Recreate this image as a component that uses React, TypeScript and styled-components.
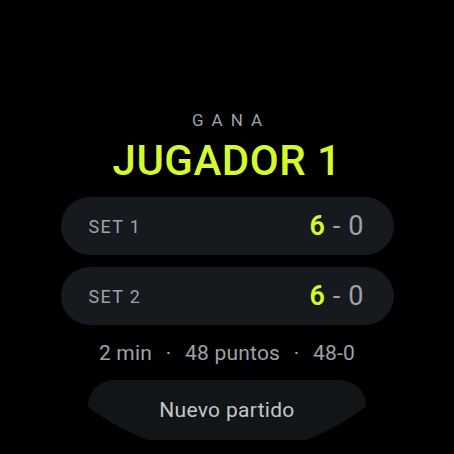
import { Fragment } from "react"
import { createGlobalStyle, styled } from "styled-components"

const GlobalStyle = createGlobalStyle`
  html, body {
    margin: 0;
    padding: 0;
    background: #000;
  }
  body {
    font-family: Roboto, "Noto Sans", "Liberation Sans", sans-serif;
  }
`

const LIME = '#d4fa2d'
const MUTED = '#9da2a8'

const Screen = styled.div`
  width: 454px;
  height: 454px;
  border-radius: 50%;
  overflow: hidden;
  background: #000;
  display: flex;
  flex-direction: column;
  align-items: center;
  padding-top: 110px;
  box-sizing: border-box;
`

const Caption = styled.div`
  font-size: 17px;
  line-height: 20px;
  letter-spacing: 0.47em;
  margin-right: -0.47em;
  color: ${MUTED};
`

const Winner = styled.h1`
  margin: 8px 0 0;
  font-size: 42px;
  line-height: 46px;
  font-weight: 500;
  letter-spacing: 0.5px;
  color: ${LIME};
`

const Sets = styled.div`
  margin-top: 13px;
  display: flex;
  flex-direction: column;
  row-gap: 12px;
`

const SetRow = styled.div`
  width: 333px;
  height: 58px;
  box-sizing: border-box;
  padding: 0 30px 0 28px;
  border-radius: 29px;
  background-color: #16191d;
  display: flex;
  align-items: center;
  justify-content: space-between;
`

const SetLabel = styled.span`
  font-size: 18px;
  letter-spacing: 1.3px;
  color: ${MUTED};
`

const Score = styled.span`
  font-size: 27px;
  color: ${MUTED};
`

const Points = styled.span<{ $win?: boolean }>`
  color: ${props => props.$win ? LIME : MUTED};
  font-weight: ${props => props.$win ? 600 : 400};
`

const Dash = styled.span`
  padding: 0 8px;
`

const Summary = styled.div`
  margin-top: 16px;
  font-size: 21px;
  line-height: 24px;
  letter-spacing: 0.2px;
  color: ${MUTED};
  display: flex;
  white-space: pre;
`

const Dot = styled.span`
  width: 33px;
  text-align: center;
`

const NewMatchButton = styled.button`
  margin-top: 15px;
  flex-shrink: 0;
  width: 278px;
  height: 60px;
  border: none;
  border-radius: 26px 26px 0 0;
  background-color: #121518;
  color: #c3c6c9;
  font-family: inherit;
  font-size: 21px;
  letter-spacing: 0.3px;
  padding: 0;
  cursor: pointer;
`

const sets = [
  { name: 'SET 1', a: 6, b: 0 },
  { name: 'SET 2', a: 6, b: 0 },
]

const stats = ['2 min', '48 puntos', '48-0']

export default function App() {
  return (
    <>
      <GlobalStyle />
      <Screen>
        <Caption>GANA</Caption>
        <Winner>JUGADOR 1</Winner>
        <Sets>
          {sets.map(set => (
            <SetRow key={set.name}>
              <SetLabel>{set.name}</SetLabel>
              <Score>
                <Points $win={set.a > set.b}>{set.a}</Points>
                <Dash>-</Dash>
                <Points $win={set.b > set.a}>{set.b}</Points>
              </Score>
            </SetRow>
          ))}
        </Sets>
        <Summary>
          {stats.map((s, i) => (
            <Fragment key={s}>
              {i > 0 && <Dot>·</Dot>}
              <span>{s}</span>
            </Fragment>
          ))}
        </Summary>
        <NewMatchButton>Nuevo partido</NewMatchButton>
      </Screen>
    </>
  )
}
